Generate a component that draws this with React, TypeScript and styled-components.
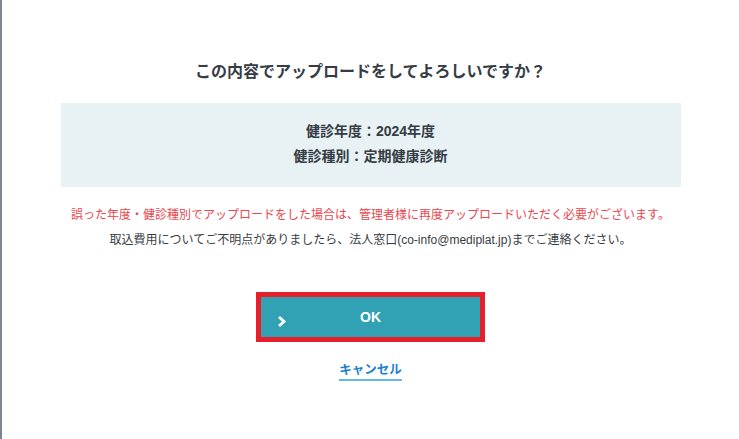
import React from "react";
import styled, { createGlobalStyle } from "styled-components";

const GlobalStyle = createGlobalStyle`
  html, body {
    margin: 0;
    padding: 0;
    background: #ffffff;
  }
  body {
    font-family: "Liberation Sans", "Noto Sans CJK JP", sans-serif;
  }
`;

const Page = styled.div`
  box-sizing: border-box;
  min-height: 439px;
  border-left: 2px solid #7c8690;
  background: #ffffff;
  display: flex;
  flex-direction: column;
  align-items: center;
  padding-top: 60px;
`;

const Title = styled.h2`
  margin: 0;
  font-size: 16px;
  line-height: 24px;
  font-weight: 700;
  color: #353c45;
  text-align: center;
`;

const InfoBox = styled.div`
  box-sizing: border-box;
  width: 620px;
  margin-top: 19px;
  padding: 16px 0 18px;
  background: #e8f1f4;
  display: flex;
  flex-direction: column;
  align-items: center;
`;

const InfoLine = styled.p`
  margin: 0;
  font-size: 14px;
  line-height: 25px;
  font-weight: 700;
  color: #363c44;
`;

const Notes = styled.div`
  margin-top: 16px;
  display: flex;
  flex-direction: column;
  align-items: center;
`;

const Note = styled.p<{ $warn?: boolean }>`
  margin: 0;
  font-size: 12px;
  line-height: 25px;
  color: ${(p) => (p.$warn ? "#e9474e" : "#373c42")};
`;

const OkButton = styled.button`
  box-sizing: border-box;
  position: relative;
  margin-top: 39px;
  width: 229px;
  height: 50px;
  border: 5px solid #e71f2a;
  background: #31a2b4;
  color: #ffffff;
  font-family: "Liberation Sans", "Noto Sans CJK JP", sans-serif;
  font-size: 14px;
  font-weight: 700;
  display: flex;
  align-items: center;
  justify-content: center;
  padding: 0;
  cursor: pointer;
`;

const Chevron = styled.svg`
  position: absolute;
  left: 15px;
  top: 18px;
  width: 11px;
  height: 13px;
`;

const CancelLink = styled.a`
  margin-top: 19px;
  font-size: 12.5px;
  line-height: 18px;
  font-weight: 700;
  color: #1c80d0;
  text-decoration: none;
  border-bottom: 2px solid #63b9e8;
  cursor: pointer;
`;

export default function App() {
  return (
    <>
      <GlobalStyle />
      <Page>
        <Title>この内容でアップロードをしてよろしいですか？</Title>
        <InfoBox>
          <InfoLine>健診年度：2024年度</InfoLine>
          <InfoLine>健診種別：定期健康診断</InfoLine>
        </InfoBox>
        <Notes>
          <Note $warn>
            誤った年度・健診種別でアップロードをした場合は、管理者様に再度アップロードいただく必要がございます。
          </Note>
          <Note>
            取込費用についてご不明点がありましたら、法人窓口(co-info@mediplat.jp)までご連絡ください。
          </Note>
        </Notes>
        <OkButton type="button">
          <Chevron viewBox="0 0 11 13" fill="none">
            <path d="M3 2 L8 6.5 L3 11" stroke="#ffffff" strokeWidth="2.8" />
          </Chevron>
          OK
        </OkButton>
        <CancelLink>キャンセル</CancelLink>
      </Page>
    </>
  );
}
